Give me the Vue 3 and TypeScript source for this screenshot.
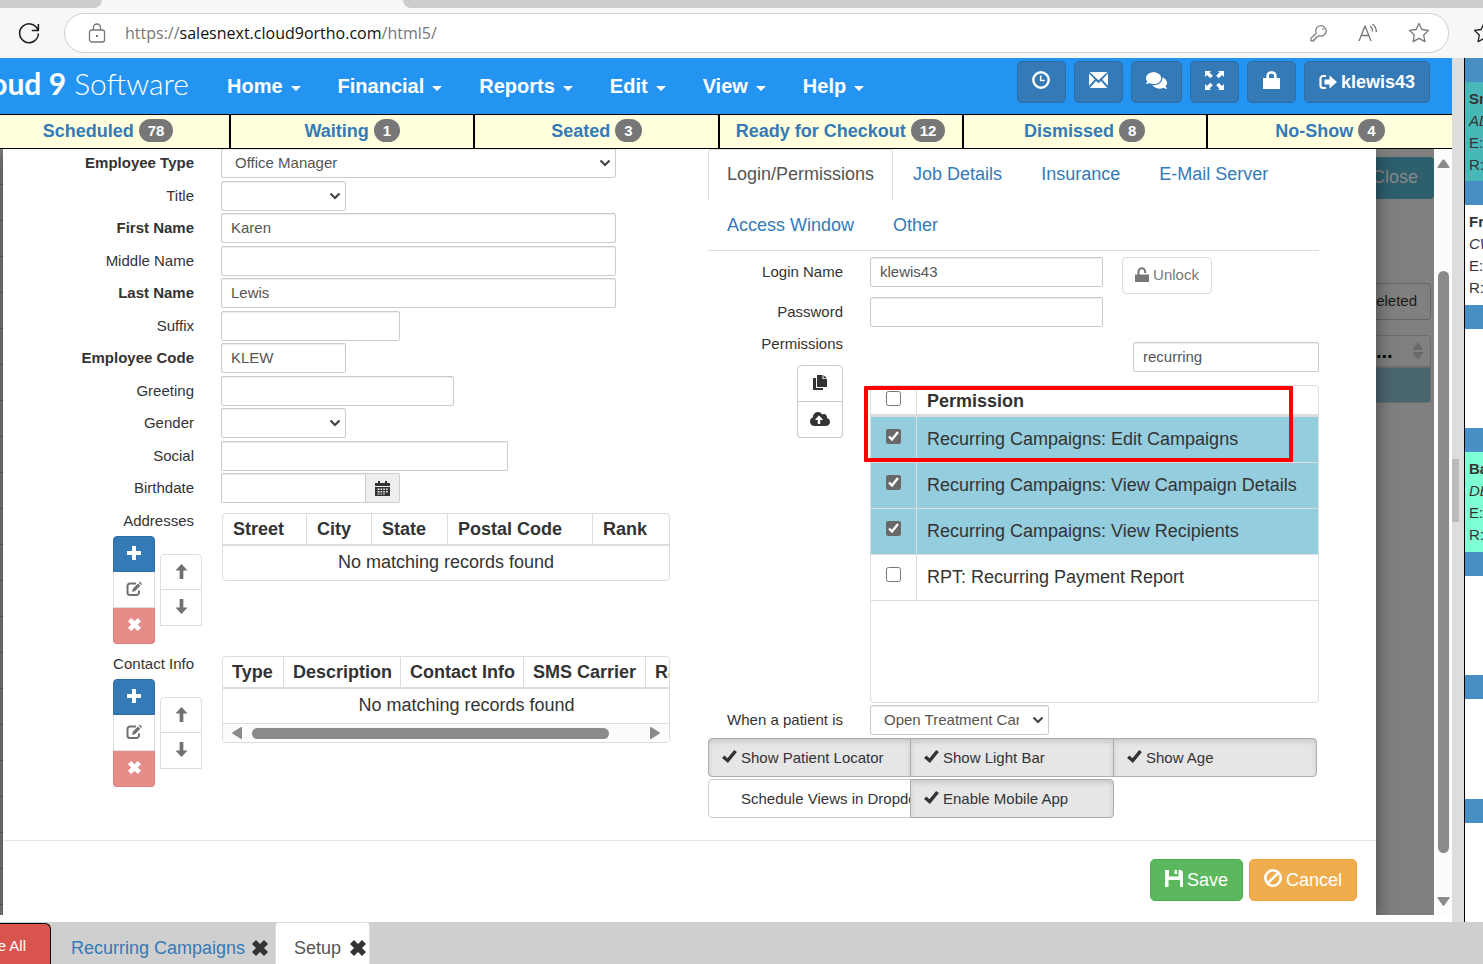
<script setup lang="ts">
import { h, ref } from 'vue'

interface Shape {
  d: string
  stroke?: number
}
interface Glyph {
  w: number
  h: number
  shapes: Shape[]
}

const glyphs: Record<string, Glyph> = {
  reload: { w: 22, h: 22, shapes: [{ d: 'M20 8.500A9.400 9.400 0 1 0 20.400 11.500M20.400 2v6.600h-6.600', stroke: 1.5 }] },
  padlock: { w: 18, h: 20, shapes: [{ d: 'M3.500 7h11a2 2 0 0 1 2 2v8a2 2 0 0 1-2 2h-11a2 2 0 0 1-2-2v-8a2 2 0 0 1 2-2zM5.500 7V4.500a3.500 3.500 0 0 1 7 0V7', stroke: 1.3 }, { d: 'M8 12h2v2h-2z' }] },
  key: { w: 18, h: 18, shapes: [{ d: 'M6.300 9.200A5.200 5.200 0 1 1 9 11.700L7.700 13H5.800v2H3.900v1.800H1v-2.700z', stroke: 1.2 }, { d: 'M12.300 4.200h1.500v1.500h-1.500z' }] },
  readAloud: { w: 20, h: 20, shapes: [{ d: 'M1 18L7 3l6 15M3.300 12.500h7.400M12.200 3.200a6 6 0 0 1 2.300 5.300M14.500 1a10 10 0 0 1 3.800 8', stroke: 1.3 }] },
  star: { w: 22, h: 22, shapes: [{ d: 'M11 1.500l2.900 6 6.600.9-4.800 4.600 1.200 6.600-5.900-3.200-5.900 3.200 1.200-6.600L1.500 8.400l6.600-.9z', stroke: 1.3 }] },
  clock: { w: 18, h: 18, shapes: [{ d: 'M9 1.300a7.700 7.700 0 1 0 0 15.400A7.700 7.700 0 1 0 9 1.300z', stroke: 2.4 }, { d: 'M8.700 4.500v5h4', stroke: 1.6 }] },
  envelope: { w: 19, h: 16, shapes: [{ d: 'M.5 0h18L9.500 8.200zM0 1.500L5.800 7.500 0 13.800zM19 1.500L13.200 7.500 19 13.800zM.8 16L7 9l2.500 2.300L12 9l6.200 7z' }] },
  comments: { w: 576, h: 512, shapes: [{ d: 'M416 192c0-88.400-93.100-160-208-160S0 103.600 0 192c0 34.300 14.100 65.900 38 92-13.400 30.200-35.500 54.200-35.800 54.500-2.200 2.300-2.800 5.700-1.500 8.700S4.800 352 8 352c36.600 0 66.900-12.300 88.700-25 32.200 15.700 70.300 25 111.300 25 114.900 0 208-71.600 208-160zm122 220c23.900-26 38-57.700 38-92 0-66.900-53.500-124.200-129.300-148.100.9 6.600 1.300 13.300 1.300 20.100 0 105.900-107.700 192-240 192-10.800 0-21.300-.8-31.700-1.900C207.800 439.600 281.800 480 368 480c41 0 79.100-9.200 111.300-25 21.800 12.700 52.100 25 88.700 25 3.200 0 6.100-1.900 7.300-4.800 1.300-2.900.7-6.300-1.500-8.700-.3-.3-22.400-24.200-35.800-54.500z' }] },
  expand: { w: 19, h: 19, shapes: [{ d: 'M0 0h6L4.500 1.500l3.300 3.300-2.500 2.500L2 4 0 6zM19 0v6l-2-2-3.300 3.300-2.500-2.500 3.300-3.300L13 0zM0 19v-6l2 2 3.300-3.300 2.500 2.500-3.300 3.300L6 19zM19 19h-6l1.500-1.500-3.300-3.300 2.500-2.500L17 15l2-2z' }] },
  lock: { w: 17, h: 18, shapes: [{ d: 'M0 7h17v11H0z' }, { d: 'M4.700 8V4.500a3 3 0 0 1 3-3h1.600a3 3 0 0 1 3 3V8', stroke: 2.6 }] },
  signOut: { w: 18, h: 16, shapes: [{ d: 'M7 2H4a2.500 2.500 0 0 0-2.500 2.500v7A2.500 2.500 0 0 0 4 14h3', stroke: 2.2 }, { d: 'M5.500 5.500h5V1.500L18 8l-7.500 6.500v-4h-5z' }] },
  plus: { w: 14, h: 14, shapes: [{ d: 'M5 0h4v5h5v4H9v5H5V9H0V5h5z' }] },
  edit: { w: 16, h: 16, shapes: [{ d: 'M10 2.500H4A2.500 2.500 0 0 0 1.500 5v6.500A2.500 2.500 0 0 0 4 14h6.500a2.500 2.500 0 0 0 2.500-2.500V9.500', stroke: 2 }, { d: 'M6 11l.8-3.300L12 2.500l2.300 2.300L9.200 10zM12.800 1.600l1-1 2.300 2.300-1 1z' }] },
  cross: { w: 16, h: 16, shapes: [{ d: 'M4 0l4 4 4-4 4 4-4 4 4 4-4 4-4-4-4 4-4-4 4-4-4-4z' }] },
  up: { w: 14, h: 16, shapes: [{ d: 'M7 0l6.500 7H9v9H5V7H.5z' }] },
  down: { w: 14, h: 16, shapes: [{ d: 'M5 0h4v9h4.500L7 16 .5 9H5z' }] },
  calendar: { w: 15, h: 15, shapes: [{ d: 'M0 2h3V0h2v2h5V0h2v2h3v3H0zM0 6h15v9H0zM2.500 7.500v1.500h2V7.500zM5.500 7.500v1.500h1.700V7.500zM8.200 7.500v1.500h1.700V7.500zM11 7.500v1.500h1.700V7.500zM2.500 10v1.500h2V10zM5.500 10v1.500h1.700V10zM8.200 10v1.500h1.700V10zM11 10v1.500h1.700V10zM2.500 12.500v1h2v-1zM5.500 12.500v1h1.700v-1zM8.200 12.500v1h1.700v-1z' }] },
  unlock: { w: 14, h: 15, shapes: [{ d: 'M0 7.500h14V15H0z' }, { d: 'M3.500 8V4.500a3.300 3.300 0 0 1 6.600 0V6', stroke: 2 }] },
  copy: { w: 14, h: 15, shapes: [{ d: 'M4 0h5.500v4H14v8H4zM10.500 0L14 3.200h-3.500zM0 3h3v10h7v2H0z' }] },
  cloud: { w: 640, h: 512, shapes: [{ d: 'M537.600 226.600c4.100-10.700 6.400-22.400 6.400-34.600 0-53-43-96-96-96-19.700 0-38.100 6-53.300 16.200C367 64.200 315.300 32 256 32c-88.400 0-160 71.600-160 160 0 2.700.1 5.400.2 8.100C40.200 219.800 0 273.200 0 336c0 79.500 64.500 144 144 144h368c70.700 0 128-57.300 128-128 0-61.900-44-113.600-102.400-125.400zM393.400 288H328v112c0 8.800-7.200 16-16 16h-48c-8.800 0-16-7.200-16-16V288h-65.400c-14.300 0-21.400-17.200-11.300-27.300l105.400-105.400c6.200-6.200 16.400-6.200 22.600 0l105.400 105.400c10.100 10.100 2.900 27.300-11.300 27.300z' }] },
  check: { w: 16, h: 14, shapes: [{ d: 'M0 8.500L2.500 6l3.300 2.800L13 0l3 2.200L6.300 14z' }] },
  save: { w: 18, h: 17, shapes: [{ d: 'M0 0h4v6.500h9.500V0H16l2 2v15h-3V10H3.500v7H0zM9.500 0h2.500v4H9.500z' }] },
  ban: { w: 18, h: 18, shapes: [{ d: 'M9 1.300a7.700 7.700 0 1 0 0 15.400A7.700 7.700 0 1 0 9 1.300zM3.800 14.200L14.200 3.800', stroke: 2.6 }] },
  triUp: { w: 14, h: 10, shapes: [{ d: 'M6 .8a1.300 1.300 0 0 1 2 0L13.500 8.500c.4.700 0 1.500-.8 1.500H1.300C.5 10 .1 9.200.5 8.500z' }] },
  triDown: { w: 14, h: 10, shapes: [{ d: 'M6 9.200a1.300 1.300 0 0 0 2 0L13.500 1.500c.4-.7 0-1.500-.8-1.500H1.300C.5 0 .1.800.5 1.500z' }] },
  triLeft: { w: 10, h: 12, shapes: [{ d: 'M.6 5.200a1 1 0 0 0 0 1.600L9 12c.5.300 1 0 1-.7V.7C10 0 9.500-.3 9 0z' }] },
  triRight: { w: 10, h: 12, shapes: [{ d: 'M9.400 5.200a1 1 0 0 1 0 1.600L1 12c-.5.300-1 0-1-.7V.7C0 0 .5-.3 1 0z' }] },
  sort: { w: 12, h: 18, shapes: [{ d: 'M6 0l5.500 8H.5zM6 18L.5 10h11z' }] },
}

const Icon = (props: { name: string; size: number }) => {
  const g = glyphs[props.name]
  return h(
    'svg',
    { width: props.size, height: Math.round((props.size * g.h) / g.w), viewBox: `0 0 ${g.w} ${g.h}`, 'aria-hidden': 'true', class: 'icon' },
    g.shapes.map((s) =>
      s.stroke
        ? h('path', { d: s.d, fill: 'none', stroke: 'currentColor', 'stroke-width': s.stroke, 'stroke-linejoin': 'round' })
        : h('path', { d: s.d, fill: 'currentColor', 'fill-rule': 'evenodd' }),
    ),
  )
}
Icon.props = ['name', 'size']

const menus = ['Home', 'Financial', 'Reports', 'Edit', 'View', 'Help']
const tools = [
  { icon: 'clock', size: 18, label: 'Time clock' },
  { icon: 'envelope', size: 19, label: 'Messages' },
  { icon: 'comments', size: 21, label: 'Chat' },
  { icon: 'expand', size: 19, label: 'Full screen' },
  { icon: 'lock', size: 17, label: 'Lock' },
]
const statuses = [
  { name: 'Scheduled', count: 78 },
  { name: 'Waiting', count: 1 },
  { name: 'Seated', count: 3 },
  { name: 'Ready for Checkout', count: 12 },
  { name: 'Dismissed', count: 8 },
  { name: 'No-Show', count: 4 },
]

interface Field {
  id: string
  label: string
  kind: 'text' | 'select' | 'date'
  size: string
  value: string
  required?: boolean
}
const fields = ref<Field[]>([
  { id: 'type', label: 'Employee Type', kind: 'select', size: 'full', value: 'Office Manager', required: true },
  { id: 'title', label: 'Title', kind: 'select', size: 'xs', value: '' },
  { id: 'first', label: 'First Name', kind: 'text', size: 'full', value: 'Karen', required: true },
  { id: 'middle', label: 'Middle Name', kind: 'text', size: 'full', value: '' },
  { id: 'last', label: 'Last Name', kind: 'text', size: 'full', value: 'Lewis', required: true },
  { id: 'suffix', label: 'Suffix', kind: 'text', size: 'sm', value: '' },
  { id: 'code', label: 'Employee Code', kind: 'text', size: 'xs', value: 'KLEW', required: true },
  { id: 'greeting', label: 'Greeting', kind: 'text', size: 'md', value: '' },
  { id: 'gender', label: 'Gender', kind: 'select', size: 'xs', value: '' },
  { id: 'social', label: 'Social', kind: 'text', size: 'lg', value: '' },
  { id: 'birth', label: 'Birthdate', kind: 'date', size: 'sm', value: '' },
])

const lists = [
  { id: 'addresses', label: 'Addresses', columns: ['Street', 'City', 'State', 'Postal Code', 'Rank'], scroll: false },
  { id: 'contacts', label: 'Contact Info', columns: ['Type', 'Description', 'Contact Info', 'SMS Carrier', 'Rank'], scroll: true },
]

const tabs = ['Login/Permissions', 'Job Details', 'Insurance', 'E-Mail Server', 'Access Window', 'Other']
const login = ref('klewis43')
const password = ref('')
const filter = ref('recurring')
const permissions = ref([
  { name: 'Recurring Campaigns: Edit Campaigns', on: true },
  { name: 'Recurring Campaigns: View Campaign Details', on: true },
  { name: 'Recurring Campaigns: View Recipients', on: true },
  { name: 'RPT: Recurring Payment Report', on: false },
])
const toggles = ref([
  { name: 'Show Patient Locator', on: true },
  { name: 'Show Light Bar', on: true },
  { name: 'Show Age', on: true },
  { name: 'Schedule Views in Dropdown', on: false },
  { name: 'Enable Mobile App', on: true },
])

const slots = [
  { tone: 'teal', lines: ['Sn', 'AD', 'E:', 'R:'] },
  { tone: 'blank', lines: ['Fr', 'CW', 'E:', 'R:'] },
  { tone: 'blank', lines: [] },
  { tone: 'mint', lines: ['Ba', 'DE', 'E:', 'R:'] },
  { tone: 'blank', lines: [] },
  { tone: 'blank', lines: [] },
  { tone: 'blank', lines: [] },
]
</script>

<template>
  <div class="window">
    <div class="strip"><span class="strip-left"></span><span class="strip-right"></span></div>
    <div class="toolbar">
      <button class="plain reload" aria-label="Reload"><Icon name="reload" :size="22" /></button>
      <div class="address">
        <Icon name="padlock" :size="18" />
        <div class="url">https://<b>salesnext.cloud9ortho.com</b>/html5/</div>
        <button class="plain" aria-label="Passwords"><Icon name="key" :size="18" /></button>
        <button class="plain" aria-label="Read aloud"><Icon name="readAloud" :size="20" /></button>
        <button class="plain" aria-label="Add favorite"><Icon name="star" :size="22" /></button>
      </div>
      <button class="plain favorites" aria-label="Favorites"><Icon name="star" :size="22" /></button>
    </div>

    <div class="middle">
      <div class="app">
        <header class="header">
          <div class="logo"><span><b>Cloud 9</b> Software</span></div>
          <nav class="menu">
            <button v-for="m in menus" :key="m" class="plain">{{ m }}<i class="caret"></i></button>
          </nav>
          <div class="tools">
            <button v-for="t in tools" :key="t.icon" class="tool" :aria-label="t.label"><Icon :name="t.icon" :size="t.size" /></button>
            <button class="tool user"><Icon name="signOut" :size="18" />klewis43</button>
          </div>
        </header>

        <nav class="statuses">
          <a v-for="s in statuses" :key="s.name" href="#">{{ s.name }} <span class="badge">{{ s.count }}</span></a>
        </nav>

        <main class="stage">
          <div class="behind-left"></div>
          <section class="modal" role="dialog" aria-label="Employee">
            <div class="body">
              <div class="left">
                <div class="form">
                  <div v-for="f in fields" :key="f.id" class="row">
                    <label :for="f.id" :class="{ required: f.required }">{{ f.label }}</label>
                    <select v-if="f.kind === 'select'" :id="f.id" v-model="f.value" class="control" :class="f.size">
                      <option :value="f.value">{{ f.value }}</option>
                    </select>
                    <div v-else-if="f.kind === 'date'" class="date" :class="f.size">
                      <input :id="f.id" v-model="f.value" type="text" class="control" />
                      <button aria-label="Pick a date"><Icon name="calendar" :size="15" /></button>
                    </div>
                    <input v-else :id="f.id" v-model="f.value" type="text" class="control" :class="f.size" />
                  </div>
                </div>

                <div v-for="l in lists" :key="l.id" class="list">
                  <div class="list-side">
                    <div class="list-label">{{ l.label }}</div>
                    <div class="list-actions">
                      <div class="stack">
                        <button class="add" aria-label="Add"><Icon name="plus" :size="14" /></button>
                        <button class="edit" aria-label="Edit"><Icon name="edit" :size="16" /></button>
                        <button class="remove" aria-label="Delete"><Icon name="cross" :size="13" /></button>
                      </div>
                      <div class="stack">
                        <button aria-label="Move up"><Icon name="up" :size="13" /></button>
                        <button aria-label="Move down"><Icon name="down" :size="13" /></button>
                      </div>
                    </div>
                  </div>
                  <div class="grid-box">
                    <div class="grid-clip">
                      <table :class="l.id">
                        <thead>
                          <tr><th v-for="c in l.columns" :key="c">{{ c }}</th></tr>
                        </thead>
                        <tbody>
                          <tr><td :colspan="l.columns.length">No matching records found</td></tr>
                        </tbody>
                      </table>
                    </div>
                    <div v-if="l.scroll" class="hscroll">
                      <Icon name="triLeft" :size="10" />
                      <div class="htrack"><div class="hthumb"></div></div>
                      <Icon name="triRight" :size="10" />
                    </div>
                  </div>
                </div>
              </div>

              <div class="right">
                <nav class="tabs">
                  <a v-for="(t, i) in tabs" :key="t" href="#" :class="{ active: i === 0 }">{{ t }}</a>
                </nav>
                <div class="login">
                  <label for="login">Login Name</label>
                  <div class="login-line">
                    <input id="login" v-model="login" type="text" class="control md" />
                    <button class="unlock"><Icon name="unlock" :size="14" />Unlock</button>
                  </div>
                  <label for="password">Password</label>
                  <input id="password" v-model="password" type="password" class="control md" />
                </div>
                <div class="perms">
                  <div class="perm-side">
                    <label for="filter">Permissions</label>
                    <div class="stack dark">
                      <button aria-label="Copy permissions"><Icon name="copy" :size="14" /></button>
                      <button aria-label="Upload permissions"><Icon name="cloud" :size="20" /></button>
                    </div>
                  </div>
                  <div class="perm-main">
                    <input id="filter" v-model="filter" type="text" class="control search" />
                    <div class="perm-box">
                      <table>
                        <thead>
                          <tr>
                            <th><input type="checkbox" aria-label="Select all" /></th>
                            <th>Permission</th>
                          </tr>
                        </thead>
                        <tbody>
                          <tr v-for="(p, i) in permissions" :key="p.name" :class="{ on: p.on }">
                            <td><input :id="'perm' + i" v-model="p.on" type="checkbox" /></td>
                            <td><label :for="'perm' + i">{{ p.name }}</label></td>
                          </tr>
                        </tbody>
                      </table>
                      <div class="marker"></div>
                    </div>
                  </div>
                </div>
                <div class="patient">
                  <label for="patient">When a patient is</label>
                  <select id="patient" class="control sm"><option>Open Treatment Card</option></select>
                </div>
                <div class="toggles">
                  <button v-for="t in toggles" :key="t.name" :aria-pressed="t.on" :class="{ on: t.on }" @click="t.on = !t.on">
                    <Icon name="check" :size="15" />{{ t.name }}
                  </button>
                </div>
              </div>
            </div>
            <footer class="footer">
              <button class="save"><Icon name="save" :size="18" />Save</button>
              <button class="cancel"><Icon name="ban" :size="18" />Cancel</button>
            </footer>
          </section>
          <div class="behind-right">
            <div class="behind-close"><span>Close</span></div>
            <div class="behind-deleted"><span>Deleted</span></div>
            <div class="behind-table">
              <div class="behind-head"><b>...</b><Icon name="sort" :size="12" /></div>
              <div class="behind-row"></div>
            </div>
          </div>
          <div class="vscroll">
            <Icon name="triUp" :size="13" />
            <div class="vtrack"><div class="vthumb"></div></div>
            <Icon name="triDown" :size="13" />
          </div>
        </main>
      </div>

      <div class="splitter"><div class="grip"></div></div>

      <aside class="schedule">
        <div v-for="(s, i) in slots" :key="i" class="slot" :class="s.tone">
          <div v-for="(line, n) in s.lines" :key="n">{{ line }}</div>
        </div>
      </aside>
    </div>

    <div class="taskbar">
      <button class="close-all">Close All</button>
      <div class="task"><a href="#">Recurring Campaigns</a><button class="plain" aria-label="Close Recurring Campaigns"><Icon name="cross" :size="16" /></button></div>
      <div class="task current"><a href="#">Setup</a><button class="plain" aria-label="Close Setup"><Icon name="cross" :size="16" /></button></div>
    </div>
  </div>
</template>

<style>
body {
  margin: 0;
  overflow: hidden;
}
</style>

<style scoped>
* {
  box-sizing: border-box;
}
.window {
  display: flex;
  flex-direction: column;
  height: 100vh;
  overflow: hidden;
  background: #fff;
  color: #333;
  font-family: "Liberation Sans", Arial, sans-serif;
  font-size: 15px;
  line-height: 20px;
}
button,
input,
select {
  margin: 0;
  font: inherit;
  color: inherit;
}
a {
  color: #337ab7;
  text-decoration: none;
}
.icon {
  display: block;
  flex: none;
  overflow: visible;
}
.plain {
  display: flex;
  align-items: center;
  padding: 0;
  border: 0;
  background: none;
}

/* browser chrome */
.strip {
  display: flex;
  justify-content: space-between;
  flex: none;
  height: 8px;
  background: #f7f7f7;
}
.strip-left {
  width: 102px;
  background: #cdcdcd;
  border-bottom-right-radius: 8px;
}
.strip-right {
  flex: 1;
  margin-left: 301px;
  background: #cdcdcd;
  border-bottom-left-radius: 8px;
}
.toolbar {
  display: flex;
  align-items: center;
  flex: none;
  height: 50px;
  background: #f7f7f7;
}
.reload {
  margin: 0 24px 0 18px;
  color: #1b1b1b;
}
.address {
  display: flex;
  align-items: center;
  gap: 30px;
  flex: 1;
  height: 40px;
  padding: 0 18px 0 23px;
  border: 1px solid #cfcfcf;
  border-radius: 20px;
  background: #fff;
  color: #767676;
}
.url {
  flex: 1;
  margin-left: -11px;
  font-family: "Open Sans", "Noto Sans", sans-serif;
  font-size: 16px;
}
.url b {
  font-weight: 400;
  color: #111;
}
.favorites {
  width: 10px;
  margin-left: 24px;
  overflow: hidden;
  color: #1b1b1b;
}

/* frame */
.middle {
  display: flex;
  flex: 1;
  min-height: 0;
}
.app {
  display: flex;
  flex-direction: column;
  flex: 1;
  min-width: 0;
  padding-bottom: 7px;
}
.header {
  display: flex;
  flex: none;
  height: 56px;
  background: #2494f2;
  color: #fff;
}
.logo {
  display: flex;
  justify-content: flex-end;
  width: 189px;
  overflow: hidden;
  white-space: nowrap;
  font-family: Lato, sans-serif;
  font-size: 30px;
  font-weight: 300;
  line-height: 50px;
}
.logo b {
  font-weight: 700;
}
.menu {
  display: flex;
  align-items: center;
  gap: 37px;
  margin-left: 38px;
  font-size: 20px;
  font-weight: 700;
}
.menu .plain {
  gap: 8px;
}
.caret {
  margin-top: 4px;
  border: 5px solid transparent;
  border-top-color: #fff;
  border-bottom: 0;
}
.tools {
  display: flex;
  gap: 8px;
  margin: 3px 22px 11px auto;
}
.tool {
  display: flex;
  align-items: center;
  justify-content: center;
  gap: 4px;
  min-width: 49px;
  padding: 0 14px 4px;
  border: 1px solid #2e6da4;
  border-radius: 5px;
  background: #337ab7;
  color: #fff;
  font-size: 18px;
  font-weight: 700;
}
.user {
  padding-bottom: 0;
}
.statuses {
  display: grid;
  grid-template-columns: repeat(6, 1fr);
  flex: none;
  height: 35px;
  margin-left: -13px;
  border: solid #000;
  border-width: 1px 0;
  background: #ffffdd;
  font-size: 18px;
  font-weight: 700;
}
.statuses a {
  display: flex;
  align-items: center;
  justify-content: center;
  gap: 5px;
  padding-bottom: 2px;
  border-right: 2px solid #000;
}
.statuses a:last-child {
  border-right: 0;
}
.badge {
  padding: 2px 9px 1px;
  border-radius: 12px;
  background: #777;
  color: #fff;
  font-size: 15px;
}

/* stage */
.stage {
  display: flex;
  flex: 1;
  min-height: 0;
  overflow: hidden;
}
.behind-left {
  width: 3px;
  background: repeating-linear-gradient(#808080 0 35px, #606060 35px 36px);
}
.modal {
  display: flex;
  flex-direction: column;
  flex: 1;
  min-width: 0;
  z-index: 1;
  background: #fff;
  box-shadow: 0 5px 18px rgba(0, 0, 0, 0.5);
}
.body {
  display: grid;
  grid-template-columns: 667fr 611fr;
  gap: 38px;
  flex: 1;
  min-height: 0;
  padding-right: 57px;
}
.left,
.right {
  min-width: 0;
}
.form {
  display: grid;
  grid-auto-rows: 33px 32px;
  margin-top: -1px;
}
.row {
  display: grid;
  grid-template-columns: 191px minmax(0, 1fr);
  gap: 27px;
  align-items: start;
}
.row label,
.login label,
.perm-side label,
.patient label {
  line-height: 30px;
  text-align: right;
}
.required {
  font-weight: 700;
}
.control {
  width: 100%;
  height: 30px;
  padding: 0 9px 2px;
  border: 1px solid #ccc;
  border-radius: 2px;
  background: #fff;
  box-shadow: inset 0 1px 1px rgba(0, 0, 0, 0.08);
  color: #555;
  outline: 0;
}
select.control {
  appearance: none;
  padding: 0 29px 0 13px;
  background: #fff url("data:image/svg+xml,%3Csvg xmlns='http://www.w3.org/2000/svg' width='12' height='8'%3E%3Cpath d='M1.500 1.500L6 6l4.500-4.500' fill='none' stroke='%23444' stroke-width='2.200'/%3E%3C/svg%3E") no-repeat right 4px center;
}
.full {
  width: 395px;
}
.lg {
  width: 287px;
}
.md {
  width: 233px;
}
.sm {
  width: 179px;
}
.xs {
  width: 125px;
}
.date {
  display: flex;
}
.date .control {
  flex: 1;
  min-width: 0;
  border-radius: 2px 0 0 2px;
}
.date button {
  display: flex;
  align-items: center;
  justify-content: center;
  width: 34px;
  border: 1px solid #ccc;
  border-left: 0;
  border-radius: 0 2px 2px 0;
  background: #eee;
}

/* record lists */
.list {
  display: grid;
  grid-template-columns: 199px minmax(0, 1fr);
  gap: 20px;
  height: 143px;
}
.list-label {
  padding-right: 8px;
  line-height: 30px;
  text-align: right;
}
.list-actions {
  display: flex;
  align-items: center;
  justify-content: flex-end;
  gap: 5px;
}
.stack {
  display: flex;
  flex-direction: column;
}
.stack button {
  display: flex;
  align-items: center;
  justify-content: center;
  width: 42px;
  height: 36px;
  padding: 0 0 2px;
  border: 1px solid #ddd;
  background: #fff;
  color: #707070;
}
.stack button + button {
  border-top: 0;
}
.stack button:first-child {
  border-radius: 4px 4px 0 0;
}
.stack .add {
  border-color: #2e6da4;
  background: #337ab7;
  color: #fff;
}
.stack .remove {
  border-color: #e17f7c;
  border-radius: 0 0 4px 4px;
  background: #e68c89;
  color: #fff;
}
.stack.dark button {
  width: 46px;
  border-color: #ccc;
  color: #333;
}
.stack.dark button:first-child {
  height: 37px;
}
.stack.dark button:last-child {
  border-radius: 0 0 4px 4px;
}
.grid-box {
  align-self: start;
  margin-top: 7px;
  border: 1px solid #ddd;
  border-radius: 4px;
  overflow: hidden;
}
.grid-clip {
  overflow: hidden;
}
table {
  border-collapse: separate;
  border-spacing: 0;
  table-layout: fixed;
  width: 100%;
  font-size: 18px;
}
.contacts {
  width: 487px;
}
th,
td {
  padding: 0 10px;
  white-space: nowrap;
}
.grid-box th {
  height: 32px;
  border-right: 1px solid #ddd;
  border-bottom: 2px solid #ddd;
  text-align: left;
}
.grid-box th:last-child {
  border-right: 0;
}
.grid-box td {
  height: 34px;
  padding-bottom: 2px;
  text-align: center;
}
.addresses th:nth-child(1) {
  width: 84px;
}
.addresses th:nth-child(2) {
  width: 65px;
}
.addresses th:nth-child(3) {
  width: 76px;
}
.addresses th:nth-child(4) {
  width: 145px;
}
.contacts th:nth-child(1) {
  width: 61px;
}
.contacts th:nth-child(2) {
  width: 117px;
}
.contacts th:nth-child(3) {
  width: 123px;
}
.contacts th:nth-child(4) {
  width: 122px;
}
.contacts th {
  padding: 0 9px;
}
.hscroll {
  display: flex;
  align-items: center;
  gap: 10px;
  height: 19px;
  padding: 0 9px;
  border-top: 1px solid #ddd;
  background: #fcfcfc;
  color: #8a8a8a;
}
.htrack {
  flex: 1;
}
.hthumb {
  width: 92%;
  height: 11px;
  border-radius: 6px;
  background: #8a8a8a;
}

/* login and permissions */
.tabs {
  display: flex;
  flex-wrap: wrap;
  column-gap: 1px;
  border-bottom: 1px solid #ddd;
  font-size: 18px;
}
.tabs a {
  height: 51px;
  padding: 0 18px;
  border: 1px solid transparent;
  line-height: 49px;
}
.tabs a:last-child {
  height: 50px;
}
.tabs a:nth-last-child(2) {
  height: 50px;
}
.tabs .active {
  border-color: #ddd;
  border-bottom-color: transparent;
  border-radius: 4px 4px 0 0;
  color: #555;
}
.login {
  display: grid;
  grid-template-columns: 135px minmax(0, 1fr);
  column-gap: 27px;
  grid-auto-rows: 40px;
  align-items: start;
  margin-top: 6px;
}
.login-line {
  display: flex;
  gap: 19px;
}
.unlock {
  display: flex;
  align-items: center;
  justify-content: center;
  gap: 4px;
  width: 90px;
  height: 37px;
  padding: 0 0 2px;
  border: 1px solid #ddd;
  border-radius: 4px;
  background: #fff;
  color: #777;
}
.perms {
  display: grid;
  grid-template-columns: 135px minmax(0, 1fr);
  gap: 27px;
  margin-top: -8px;
}
.perm-side {
  display: flex;
  flex-direction: column;
  align-items: flex-end;
  gap: 6px;
}
.perm-main {
  padding-top: 13px;
}
.search {
  display: block;
  width: 186px;
  margin-left: auto;
}
.perm-box {
  position: relative;
  height: 318px;
  margin-top: 13px;
  border: 1px solid #ddd;
  border-radius: 4px;
}
.perm-box th {
  height: 31px;
  border-bottom: 3px solid #ddd;
  text-align: left;
}
.perm-box th:last-child {
  padding-top: 2px;
}
.perm-box th:first-child,
.perm-box td:first-child {
  width: 46px;
  padding: 0;
  border-right: 1px solid #ddd;
  text-align: center;
}
.perm-box td {
  height: 46px;
  padding-bottom: 2px;
  border-bottom: 1px solid #ddd;
}
.perm-box .on {
  background: #94cdde;
}
.perm-box input {
  display: block;
  width: 15px;
  height: 15px;
  margin: 0 auto 3px;
  accent-color: #686868;
}
.perm-box td input {
  margin-bottom: 7px;
}
.marker {
  position: absolute;
  top: 0;
  left: -7px;
  width: 429px;
  height: 76px;
  border: 4px solid #f00;
  border-radius: 1px;
}
.patient {
  display: grid;
  grid-template-columns: 135px minmax(0, 1fr);
  column-gap: 27px;
  margin-top: 2px;
}
.toggles {
  display: grid;
  grid-template-columns: repeat(3, 1fr);
  row-gap: 2px;
  margin: 3px 2px 0 0;
}
.toggles button {
  display: flex;
  align-items: center;
  gap: 4px;
  height: 39px;
  padding: 0 0 0 13px;
  overflow: hidden;
  border: 1px solid #ccc;
  background: #fff;
  white-space: nowrap;
}
.toggles button:nth-child(3n + 1) {
  border-radius: 4px 0 0 4px;
}
.toggles button:nth-child(3),
.toggles button:last-child {
  border-radius: 0 4px 4px 0;
}
.toggles button:not(:nth-child(3n + 1)) {
  margin-left: -1px;
}
.toggles button.on {
  border-color: #adadad;
  background: #e6e6e6;
  box-shadow: inset 0 3px 5px rgba(0, 0, 0, 0.125);
}
.toggles .icon {
  margin-bottom: 3px;
  visibility: hidden;
}
.toggles .on .icon {
  visibility: visible;
}
.footer {
  display: flex;
  justify-content: flex-end;
  gap: 6px;
  flex: none;
  padding: 18px 19px 14px;
  border-top: 1px solid #e5e5e5;
}
.footer button {
  display: flex;
  align-items: center;
  justify-content: center;
  gap: 4px;
  height: 42px;
  padding: 0 14px;
  border: 1px solid #4cae4c;
  border-radius: 5px;
  background: #5cb85c;
  color: #fff;
  font-size: 18px;
}
.footer .icon {
  margin-bottom: 4px;
}
.footer .cancel {
  border-color: #eea236;
  background: #f0ad4e;
}

/* page under the dialog */
.behind-right {
  width: 58px;
  overflow: hidden;
  background: #808080;
}
.behind-close,
.behind-deleted {
  display: flex;
  align-items: center;
  justify-content: flex-end;
  height: 42px;
  margin-top: 8px;
  padding: 0 16px 2px 0;
  border-radius: 0 4px 4px 0;
  background: #2d5f6d;
  color: #888;
  font-size: 18px;
}
.behind-deleted {
  height: 37px;
  margin: 84px 3px 0 0;
  padding-right: 13px;
  border: 1px solid #666;
  border-left: 0;
  background: none;
  color: #1a1a1a;
  font-size: 15px;
}
.behind-table {
  margin: 15px 3px 0 0;
  border: 1px solid #6e6e6e;
  border-left: 0;
  border-radius: 0 4px 4px 0;
}
.behind-head {
  display: flex;
  align-items: center;
  justify-content: space-between;
  height: 32px;
  padding-right: 6px;
  border-bottom: 2px solid #6e6e6e;
  color: #696969;
}
.behind-head b {
  color: #000;
  font-size: 20px;
}
.behind-row {
  height: 34px;
  background: #4a6670;
}
.vscroll {
  display: flex;
  flex-direction: column;
  align-items: center;
  width: 18px;
  padding: 10px 0 9px;
  z-index: 2;
  background: #fcfcfc;
  color: #8a8a8a;
}
.vtrack {
  display: flex;
  flex-direction: column;
  justify-content: flex-end;
  flex: 1;
  padding-bottom: 44px;
}
.vthumb {
  width: 11px;
  height: 85%;
  border-radius: 6px;
  background: #8a8a8a;
}

/* schedule sliver */
.splitter {
  display: flex;
  align-items: center;
  width: 12px;
  background: #ddd;
}
.grip {
  width: 7px;
  height: 63px;
  background: #bbb;
}
.schedule {
  display: grid;
  grid-auto-rows: 123px 124px;
  width: 19px;
  overflow: hidden;
  border-left: 1px solid #000;
}
.slot {
  padding: 6px 0 0 4px;
  overflow: hidden;
  border-top: 24px solid #478fc4;
  line-height: 22px;
  white-space: nowrap;
}
.slot div:nth-child(1) {
  font-weight: 700;
}
.slot div:nth-child(2) {
  font-style: italic;
}
.teal {
  background: #48b7b7;
}
.mint {
  background: #7fffd4;
}

/* open screens */
.taskbar {
  display: flex;
  align-items: stretch;
  flex: none;
  height: 42px;
  overflow: hidden;
  background: #cfcfcf;
}
.close-all {
  margin: 1px 1px 0 -60px;
  width: 111px;
  padding: 4px 24px 0 0;
  border: 1px solid #000;
  border-bottom: 0;
  border-radius: 0 6px 0 0;
  background: #d9534f;
  color: #fff;
  text-align: right;
}
.task {
  display: flex;
  align-items: center;
  gap: 7px;
  padding: 9px 6px 0 18px;
  border: 1px solid transparent;
  border-bottom: 0;
  font-size: 18px;
}
.current {
  gap: 9px;
  padding-right: 3px;
  border-color: #ddd;
  border-radius: 4px 4px 0 0;
  background: #fff;
}
.current a {
  color: #555;
}
</style>
